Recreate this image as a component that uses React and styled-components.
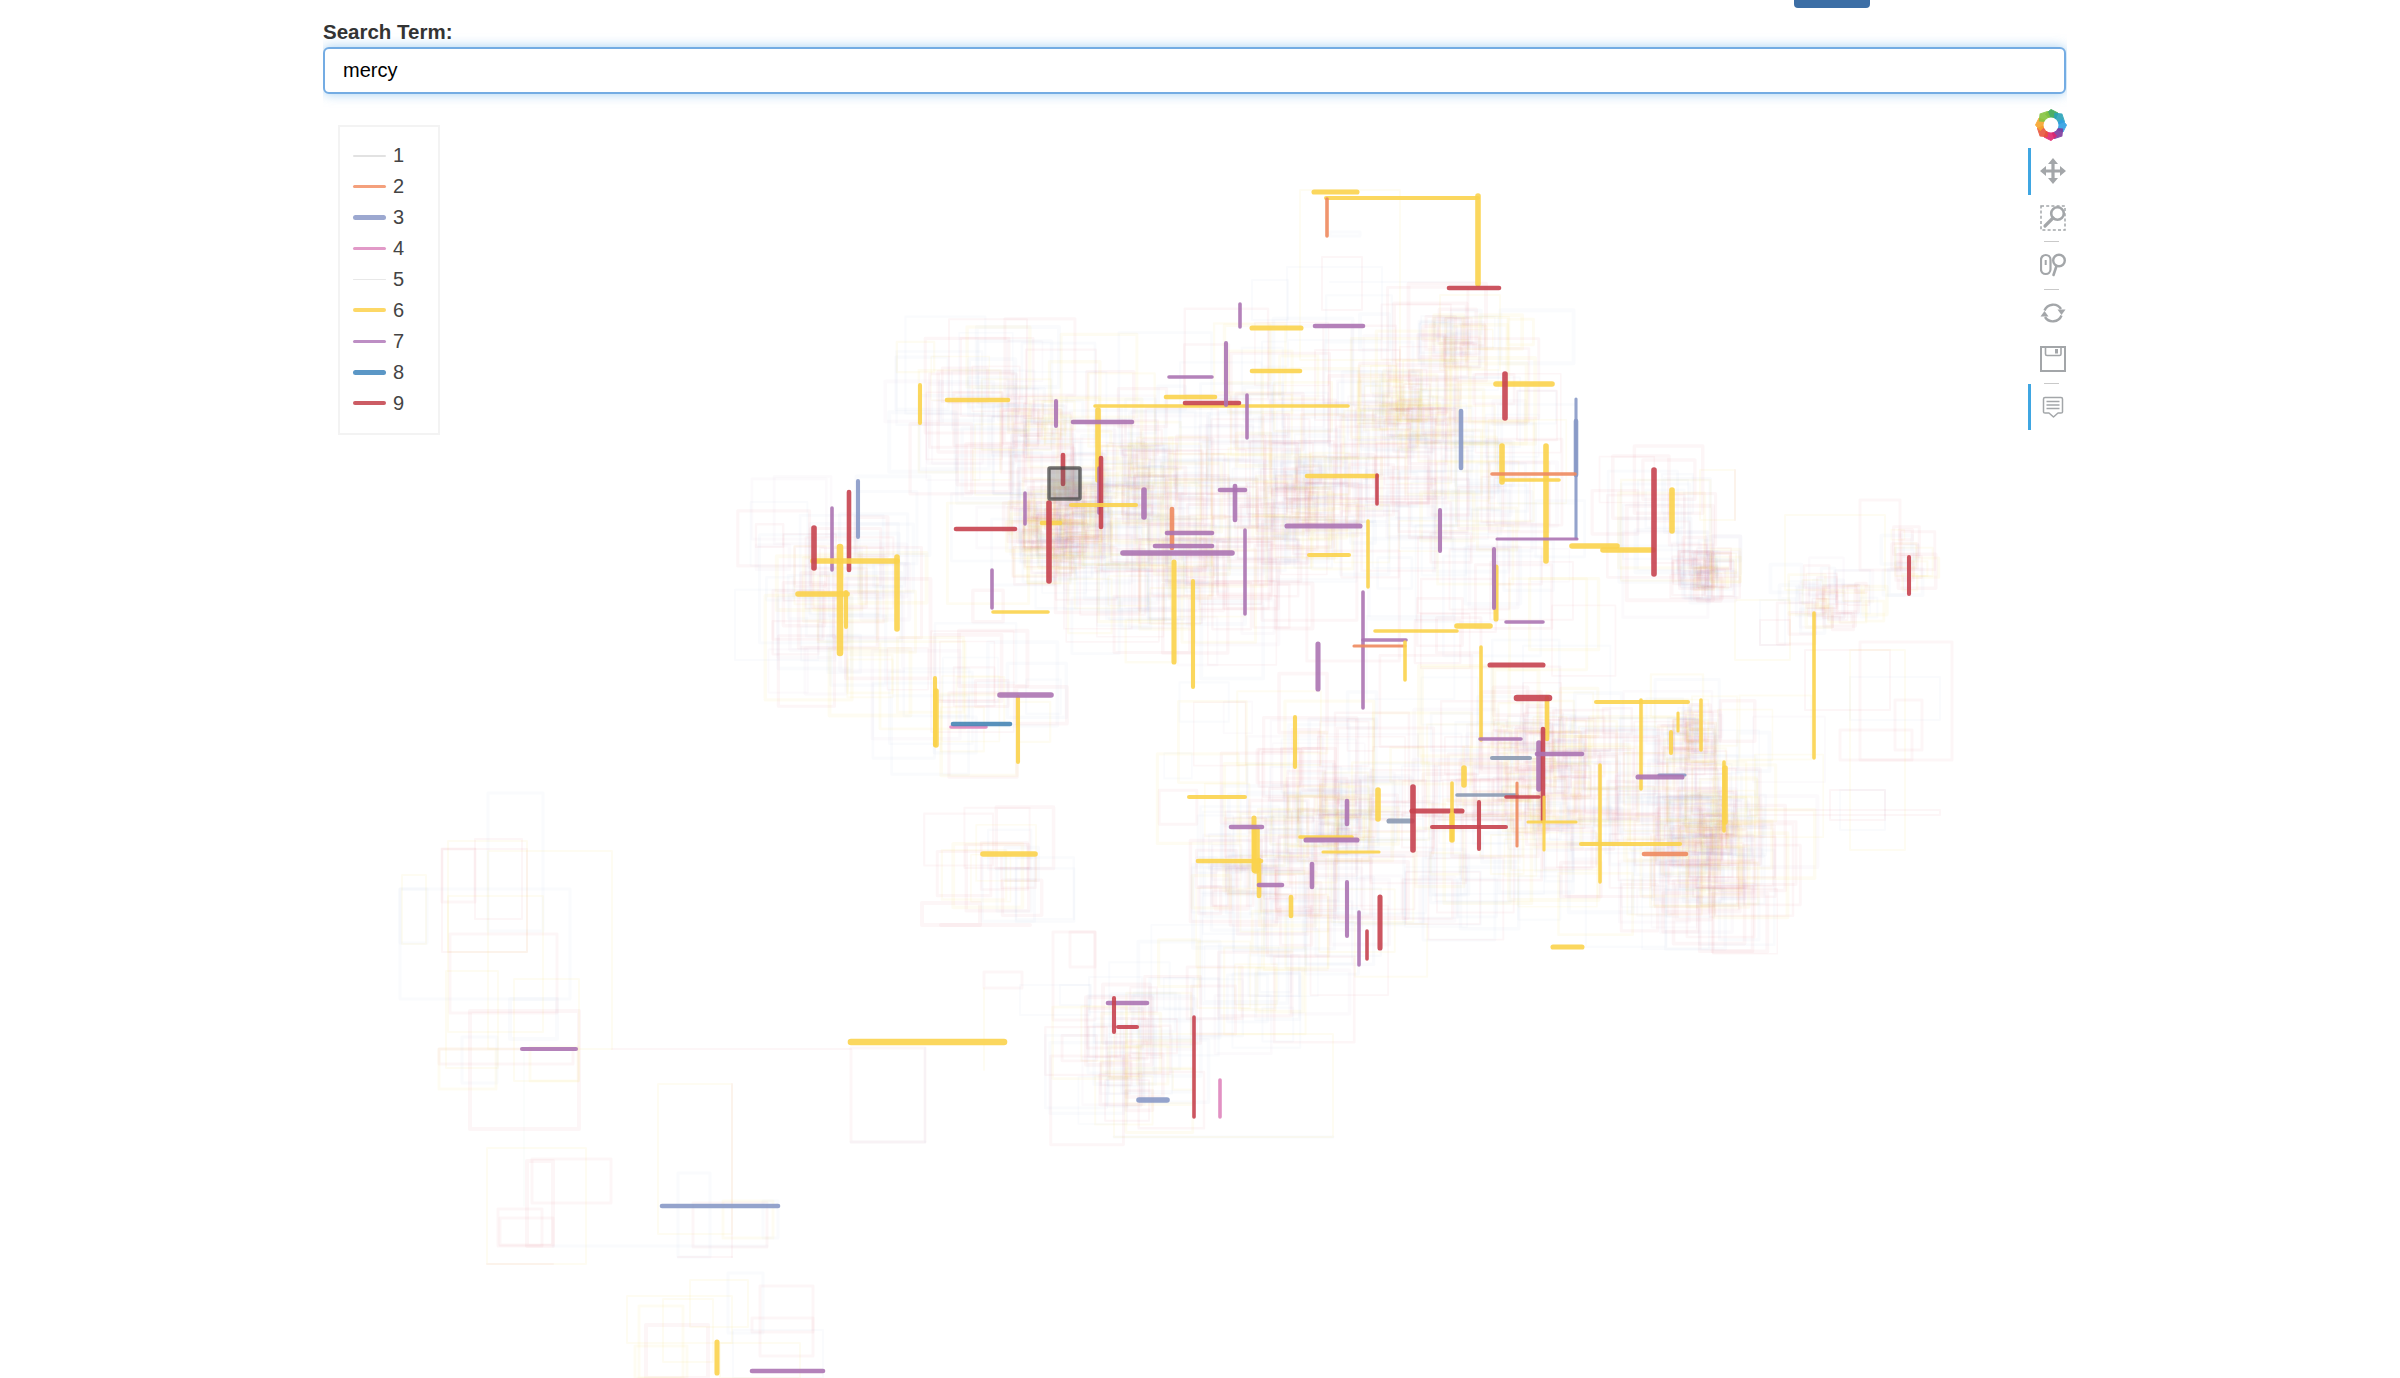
import React from "react";
import styled, { createGlobalStyle } from "styled-components";

const GlobalStyle = createGlobalStyle`
  html, body {
    margin: 0;
    padding: 0;
    background: #fff;
    overflow: hidden;
    font-family: "Liberation Sans", Arial, sans-serif;
  }
`;

const Page = styled.div`
  width: 1744px;
  height: 1378px;
  margin-left: 323px;
  display: flex;
  flex-direction: column;
  overflow: hidden;
`;

const TopBar = styled.div`
  height: 8px;
  display: flex;
  justify-content: flex-end;
  padding-right: 197px;
`;

const TopButton = styled.button`
  width: 76px;
  height: 8px;
  padding: 0;
  border: none;
  border-radius: 0 0 4px 4px;
  background: #3c6ea5;
`;

const Label = styled.label`
  display: block;
  margin-top: 12px;
  height: 27px;
  font-size: 20.5px;
  line-height: 23px;
  font-weight: 700;
  color: #333;
`;

const SearchInput = styled.input`
  box-sizing: border-box;
  width: calc(100% - 1px);
  height: 47px;
  padding: 0 18px;
  border: 2px solid #74ace3;
  border-radius: 6px;
  outline: none;
  box-shadow: 0 0 12px rgba(102, 175, 233, 0.6);
  font-family: inherit;
  font-size: 20px;
  color: #000;
`;

const Plot = styled.div`
  position: relative;
  margin-top: 8px;
  flex: 1;
  min-height: 0;
`;

const Canvas = styled.svg`
  display: block;
  width: 100%;
  height: 100%;
  filter: blur(0.5px);
`;

const Legend = styled.div`
  position: absolute;
  top: 23px;
  left: 15px;
  box-sizing: border-box;
  width: 102px;
  height: 310px;
  padding: 13.5px 0 0 13px;
  border: 2px solid #f3f3f3;
  background: #fff;
`;

const LegendRow = styled.div`
  height: 30.9px;
  display: flex;
  align-items: center;
  gap: 7px;
  font-size: 20px;
  color: #444;
`;

const Swatch = styled.span`
  width: 33px;
  height: ${({ $size }) => $size}px;
  border-radius: 3px;
  background: ${({ $color }) => $color};
`;

const Toolbar = styled.div`
  position: absolute;
  top: 0;
  right: 1px;
  width: 38px;
  display: flex;
  flex-direction: column;
`;

const LogoSlot = styled.div`
  height: 46px;
  display: flex;
  align-items: center;
  justify-content: flex-end;
  margin-right: -1px;
`;

const Tool = styled.div`
  box-sizing: border-box;
  height: 46.5px;
  display: flex;
  align-items: center;
  justify-content: flex-end;
  border-left: 3px solid ${({ $active }) => ($active ? "#3fa6e2" : "transparent")};
`;

const ToolDivider = styled.div`
  align-self: flex-end;
  width: 15px;
  height: 1px;
  margin-right: 7px;
  background: #c9c9c9;
`;

const ICON = "#a3a6a9";

const BokehLogo = () => {
  const colors = ["#3aa655", "#2aa3b8", "#2f9fe3", "#7d3a9e", "#e0256f", "#e8553c", "#f7a52c", "#86c440"];
  return (
    <svg width="32" height="32" viewBox="0 0 32 32">
      {colors.map((c, i) => (
        <path
          key={c}
          d="M10.5 5 L16 0.5 L23 4 L20.5 10 L14.5 9.6 Z"
          fill={c}
          stroke={c}
          strokeWidth="1"
          strokeLinejoin="round"
          opacity="0.9"
          transform={`rotate(${i * 45} 16 16)`}
        />
      ))}
      <circle cx="16" cy="16" r="7.5" fill="#fff" />
    </svg>
  );
};

const MoveIcon = () => (
  <svg width="26" height="26" viewBox="0 0 26 26">
    <path
      fill={ICON}
      d="M13 0 l5 6 h-3.4 v5.4 H20 V8 l6 5 -6 5 v-3.4 h-5.4 V20 H18 l-5 6 -5 -6 h3.4 v-5.4 H6 V18 l-6 -5 6 -5 v3.4 h5.4 V6 H8 z"
    />
  </svg>
);

const BoxZoomIcon = () => (
  <svg width="26" height="26" viewBox="0 0 26 26" fill="none" stroke={ICON}>
    <rect x="1" y="1" width="24" height="24" strokeWidth="1.5" strokeDasharray="3 2.2" />
    <circle cx="17.5" cy="8.5" r="6.3" strokeWidth="2.6" fill="#fff" />
    <path d="M13 13 L5 21" strokeWidth="3.2" strokeLinecap="round" />
  </svg>
);

const WheelZoomIcon = () => (
  <svg width="26" height="24" viewBox="0 0 26 24" fill="none" stroke={ICON}>
    <rect x="1" y="2" width="9.5" height="19" rx="4.7" strokeWidth="2.2" />
    <path d="M5.7 7 V12" strokeWidth="2" />
    <circle cx="19" cy="7.5" r="5.8" strokeWidth="2.4" />
    <path d="M16.5 13 L13.5 22" strokeWidth="2.6" strokeLinecap="round" />
  </svg>
);

const ResetIcon = () => (
  <svg width="26" height="26" viewBox="0 0 26 26" fill="none" stroke={ICON}>
    <path d="M4.5 10.5 A9.3 9.3 0 0 1 21 9" strokeWidth="2.4" />
    <path d="M21.5 15.5 A9.3 9.3 0 0 1 5 17" strokeWidth="2.4" />
    <path d="M17.5 9.5 H25.5 L21.5 15 Z" fill={ICON} stroke="none" />
    <path d="M0.5 16.5 H8.5 L4.5 11 Z" fill={ICON} stroke="none" />
  </svg>
);

const SaveIcon = () => (
  <svg width="26" height="26" viewBox="0 0 26 26" fill="none" stroke={ICON}>
    <rect x="1" y="1" width="24" height="24" strokeWidth="2" />
    <path d="M5.5 1 V8 Q5.5 9.5 7 9.5 H19.5 Q21 9.5 21 8 V1" strokeWidth="1.6" />
    <rect x="15" y="3" width="3" height="4.5" fill={ICON} stroke="none" />
  </svg>
);

const HoverIcon = () => (
  <svg width="26" height="24" viewBox="0 0 26 24" fill="none" stroke={ICON}>
    <path
      d="M5 2.5 H21 Q22.5 2.5 22.5 4 V17 Q22.5 18 21 18 H18 L13.5 22 L9 18 H5 Q3.5 18 3.5 17 V4 Q3.5 2.5 5 2.5 Z"
      strokeWidth="1.5"
      strokeLinejoin="round"
    />
    <path d="M6.5 6.5 H19.5 M6.5 10 H19.5 M6.5 13.5 H19.5" strokeWidth="1.4" />
  </svg>
);

const LEGEND = [
  ["1", "#e2e2e2", 1.5],
  ["2", "#f4a07c", 3],
  ["3", "#9ca8d0", 5],
  ["4", "#e29ac8", 3.5],
  ["5", "#e8e8e8", 1.5],
  ["6", "#fdd866", 4],
  ["7", "#bd8ec4", 3.5],
  ["8", "#5b97c6", 5],
  ["9", "#cc5c64", 4],
];

const STROKE = {
  y: "#fbd34c",
  r: "#c6434f",
  p: "#ac74b2",
  b: "#8899c6",
  o: "#ee8a5e",
  s: "#4685b5",
  k: "#df85bd",
  g: "#8b9ab2",
};

// color, width, x1, y1, x2, y2
const LINES = [
  ["y", 3.5, 920, 385, 920, 423], ["y", 4, 947, 400, 1008, 400], ["p", 3.5, 1056, 401, 1056, 426],
  ["y", 5, 1098, 410, 1098, 480], ["p", 4, 1073, 422, 1132, 422], ["y", 3, 1095, 406, 1348, 406],
  ["y", 4, 1166, 397, 1215, 397], ["r", 4, 1185, 403, 1239, 403], ["p", 3, 1169, 377, 1212, 377],
  ["r", 4, 1063, 455, 1063, 484], ["p", 3, 1099, 468, 1099, 513], ["r", 4, 1101, 458, 1101, 527],
  ["y", 3.5, 1071, 505, 1136, 505], ["p", 5, 1144, 490, 1144, 517], ["o", 4, 1172, 509, 1172, 548],
  ["p", 4, 1167, 533, 1212, 533], ["p", 4, 1155, 546, 1212, 546], ["p", 5, 1123, 553, 1232, 553],
  ["r", 4, 849, 492, 849, 570], ["p", 3, 832, 508, 832, 570], ["b", 3.5, 858, 481, 858, 537],
  ["y", 5, 813, 561, 897, 561], ["r", 5, 814, 528, 814, 568], ["r", 4, 956, 529, 1015, 529],
  ["p", 3, 1025, 493, 1025, 524], ["y", 4, 1042, 523, 1060, 523], ["r", 5, 1049, 503, 1049, 581],
  ["y", 5, 897, 557, 897, 629], ["y", 6, 840, 547, 840, 653], ["y", 5, 798, 594, 847, 594],
  ["y", 3.5, 846, 592, 846, 627], ["p", 3, 992, 570, 992, 608], ["y", 3, 993, 612, 1048, 612],
  ["y", 4.5, 1174, 562, 1174, 662], ["y", 3.5, 1193, 581, 1193, 687], ["y", 3.5, 935, 678, 935, 745],
  ["y", 5, 936, 691, 936, 745], ["y", 3.5, 1018, 697, 1018, 762], ["p", 5, 1000, 695, 1051, 695],
  ["k", 3, 951, 727, 986, 727], ["s", 4, 953, 724, 1010, 724], ["y", 5, 983, 854, 1035, 854],
  ["y", 4.5, 1314, 192, 1357, 192], ["y", 3.5, 1326, 198, 1478, 198], ["o", 3, 1327, 199, 1327, 236],
  ["y", 5, 1478, 196, 1478, 284], ["r", 4, 1449, 288, 1499, 288], ["p", 3, 1240, 304, 1240, 327],
  ["y", 4.5, 1252, 328, 1301, 328], ["p", 4, 1315, 326, 1363, 326], ["p", 3.5, 1226, 343, 1226, 405],
  ["y", 4, 1252, 371, 1300, 371], ["p", 3, 1247, 395, 1247, 438], ["y", 5, 1496, 384, 1552, 384],
  ["r", 5, 1505, 374, 1505, 418], ["b", 4, 1461, 411, 1461, 468], ["b", 2.5, 1576, 399, 1576, 538],
  ["b", 4, 1576, 421, 1576, 475], ["y", 5, 1502, 446, 1502, 482], ["y", 5, 1546, 446, 1546, 561],
  ["o", 3, 1492, 474, 1575, 474], ["y", 3, 1502, 480, 1559, 480], ["y", 4, 1307, 476, 1377, 476],
  ["r", 3, 1377, 475, 1377, 504], ["p", 4, 1220, 490, 1245, 490], ["p", 4, 1235, 486, 1235, 520],
  ["p", 4.5, 1287, 526, 1360, 526], ["y", 3, 1368, 521, 1368, 587], ["p", 3.5, 1440, 510, 1440, 551],
  ["p", 2.5, 1497, 539, 1577, 539], ["y", 5, 1603, 550, 1653, 550], ["y", 5, 1572, 546, 1617, 546],
  ["r", 5, 1654, 470, 1654, 574], ["y", 5, 1672, 490, 1672, 531], ["p", 3, 1245, 530, 1245, 614],
  ["y", 3.5, 1309, 555, 1349, 555], ["y", 4.5, 1496, 567, 1496, 619], ["p", 3.5, 1494, 549, 1494, 608],
  ["p", 3, 1506, 622, 1543, 622], ["p", 3, 1363, 592, 1363, 708], ["y", 3, 1375, 631, 1457, 631],
  ["y", 5, 1457, 626, 1490, 626], ["p", 3, 1363, 640, 1406, 640], ["o", 2.5, 1354, 646, 1405, 646],
  ["y", 3, 1405, 642, 1405, 680], ["p", 4.5, 1318, 644, 1318, 689], ["r", 4.5, 1490, 665, 1543, 665],
  ["y", 3, 1481, 647, 1481, 740], ["y", 4, 1547, 698, 1547, 739], ["r", 6, 1517, 698, 1549, 698],
  ["p", 3, 1480, 739, 1521, 739], ["p", 5, 1539, 743, 1539, 789], ["r", 4, 1543, 729, 1543, 821],
  ["p", 4, 1537, 754, 1582, 754], ["g", 3.5, 1492, 758, 1530, 758], ["y", 5, 1464, 768, 1464, 785],
  ["y", 3.5, 1295, 717, 1295, 767], ["y", 3.5, 1189, 797, 1245, 797], ["y", 5, 1378, 790, 1378, 819],
  ["p", 4, 1347, 801, 1347, 824], ["g", 4.5, 1389, 821, 1412, 821], ["r", 5, 1413, 787, 1413, 850],
  ["r", 4.5, 1412, 811, 1462, 811], ["y", 3, 1452, 783, 1452, 840], ["y", 5, 1452, 815, 1452, 840],
  ["r", 3.5, 1432, 827, 1506, 827], ["r", 3.5, 1479, 802, 1479, 849], ["g", 3, 1457, 795, 1517, 795],
  ["o", 2.5, 1517, 783, 1517, 846], ["r", 3, 1506, 797, 1539, 797], ["y", 2.5, 1528, 822, 1576, 822],
  ["y", 2.5, 1544, 797, 1544, 850], ["y", 3, 1600, 765, 1600, 882], ["y", 3.5, 1581, 844, 1680, 844],
  ["o", 4, 1644, 854, 1686, 854], ["y", 3.5, 1596, 702, 1688, 702], ["y", 3, 1641, 700, 1641, 789],
  ["y", 3, 1701, 700, 1701, 750], ["y", 2.5, 1678, 713, 1678, 731], ["y", 3.5, 1671, 732, 1671, 753],
  ["b", 2.5, 1659, 775, 1685, 775], ["p", 4.5, 1638, 777, 1682, 777], ["y", 3, 1724, 762, 1724, 831],
  ["y", 5, 1725, 768, 1725, 822], ["y", 3, 1814, 613, 1814, 758], ["r", 3.5, 1909, 557, 1909, 594],
  ["y", 4.5, 1553, 947, 1582, 947], ["y", 4.5, 1254, 818, 1254, 870], ["y", 7, 1256, 830, 1256, 870],
  ["p", 4, 1231, 827, 1262, 827], ["y", 4, 1259, 860, 1259, 896], ["y", 4, 1198, 861, 1261, 861],
  ["p", 4, 1259, 885, 1282, 885], ["y", 4, 1291, 897, 1291, 916], ["p", 4, 1312, 864, 1312, 887],
  ["y", 3, 1300, 837, 1352, 837], ["p", 4.5, 1306, 840, 1357, 840], ["y", 2.5, 1323, 852, 1379, 852],
  ["p", 3.5, 1347, 882, 1347, 936], ["p", 3, 1359, 912, 1359, 965], ["r", 3, 1367, 931, 1367, 959],
  ["r", 4.5, 1380, 897, 1380, 948], ["y", 6, 851, 1042, 1004, 1042], ["p", 4, 1108, 1003, 1147, 1003],
  ["r", 3.5, 1114, 998, 1114, 1032], ["r", 3.5, 1118, 1027, 1137, 1027], ["r", 3, 1194, 1017, 1194, 1117],
  ["k", 3, 1220, 1080, 1220, 1117], ["b", 5, 1139, 1100, 1167, 1100], ["p", 4, 752, 1371, 823, 1371],
  ["y", 4.5, 717, 1342, 717, 1373], ["p", 3.5, 522, 1049, 576, 1049], ["b", 4, 662, 1206, 778, 1206],
];

const FAINT = { r: "#c8303c", y: "#f5c400", b: "#6f8cc0", p: "#9a5fa8", t: "#6fb0a0" };
const FAINT_OPACITY = { r: 0.042, y: 0.05, b: 0.03, p: 0.03, t: 0.03 };

// color, width, x1, y1, x2, y2 of the faint boxes in the sparse corners
const BOXES = [
  ["b", 3, 488, 793, 543, 931], ["r", 2, 475, 839, 522, 919], ["y", 2, 448, 841, 527, 952],
  ["r", 3, 442, 849, 475, 902], ["y", 2, 488, 851, 612, 1049], ["b", 3, 400, 889, 570, 999],
  ["y", 2, 402, 875, 426, 944], ["b", 3, 400, 889, 427, 943], ["r", 2, 442, 849, 527, 952],
  ["r", 3, 450, 934, 557, 1013], ["y", 2, 448, 896, 543, 1032], ["r", 4, 470, 1011, 579, 1129],
  ["y", 2, 514, 979, 579, 1081], ["b", 4, 510, 999, 557, 1039], ["y", 2, 446, 971, 498, 1068],
  ["r", 3, 439, 1049, 573, 1064], ["y", 3, 439, 1049, 496, 1089], ["b", 3, 462, 1037, 497, 1083],
  ["y", 3, 530, 1047, 578, 1081], ["r", 2, 612, 1049, 851, 1049], ["r", 3, 851, 1048, 925, 1142],
  ["b", 3, 851, 1142, 925, 1142], ["b", 2, 925, 1048, 925, 1142], ["y", 2, 658, 1084, 732, 1234],
  ["b", 3, 678, 1173, 710, 1257], ["r", 2, 678, 1257, 732, 1257], ["r", 2, 732, 1084, 732, 1257],
  ["y", 3, 723, 1201, 773, 1238], ["b", 3, 763, 1201, 778, 1238], ["r", 3, 693, 1203, 767, 1247],
  ["t", 1.5, 524, 1049, 524, 1206], ["y", 2, 487, 1148, 586, 1264], ["r", 3, 532, 1159, 611, 1203],
  ["r", 4, 527, 1161, 553, 1246], ["r", 3, 498, 1209, 542, 1246], ["r", 3, 500, 1218, 553, 1245],
  ["b", 3, 553, 1246, 767, 1246], ["r", 2, 487, 1264, 553, 1264], ["y", 2, 627, 1296, 732, 1343],
  ["y", 3, 639, 1306, 683, 1378], ["r", 4, 646, 1325, 708, 1378], ["y", 2, 690, 1280, 748, 1327],
  ["b", 3, 728, 1273, 763, 1333], ["r", 3, 760, 1286, 813, 1356], ["b", 2, 733, 1330, 823, 1378],
  ["y", 2, 663, 1299, 713, 1362], ["r", 3, 752, 1318, 813, 1332], ["y", 2, 720, 1343, 800, 1378],
  ["y", 3, 635, 1346, 687, 1378], ["b", 3, 1114, 1137, 1333, 1137], ["y", 2, 1114, 1034, 1333, 1137],
  ["r", 3, 984, 972, 1022, 988], ["y", 2, 984, 988, 984, 1070], ["b", 2, 1020, 985, 1090, 1015],
  ["r", 3, 1053, 932, 1095, 1020], ["r", 3, 1070, 932, 1095, 967], ["r", 4, 922, 903, 980, 925],
  ["r", 4, 941, 925, 1030, 925], ["b", 2, 1060, 985, 1091, 1005], ["b", 2, 1089, 977, 1142, 1012],
  ["y", 2, 1300, 190, 1400, 360], ["b", 3, 1330, 232, 1360, 236], ["b", 2, 1330, 282, 1478, 282],
  ["b", 2, 1287, 267, 1382, 340], ["r", 2, 1322, 257, 1362, 310], ["b", 2, 1252, 280, 1288, 320],
  ["y", 2, 1440, 295, 1500, 370], ["r", 2, 1315, 350, 1400, 420],
  ["y", 2, 1700, 470, 1735, 520], ["r", 2, 1735, 470, 1735, 520], ["b", 2, 1638, 480, 1688, 570],
  ["y", 2, 1785, 515, 1885, 590], ["r", 3, 1860, 500, 1900, 570], ["r", 2, 1805, 650, 1890, 710],
  ["r", 3, 1860, 642, 1952, 760], ["b", 2, 1850, 677, 1940, 720], ["r", 3, 1895, 700, 1922, 750],
  ["r", 3, 1840, 730, 1912, 760], ["y", 2, 1735, 600, 1790, 660], ["r", 2, 1760, 620, 1790, 645],
  ["b", 2, 1760, 600, 1785, 645], ["r", 2, 1830, 790, 1885, 820], ["b", 2, 1840, 790, 1885, 830],
  ["y", 2, 1850, 650, 1905, 850], ["r", 2, 1750, 810, 1940, 815],
];

const mulberry = (seed) => () => {
  seed |= 0;
  seed = (seed + 0x6d2b79f5) | 0;
  let t = Math.imul(seed ^ (seed >>> 15), 1 | seed);
  t = (t + Math.imul(t ^ (t >>> 7), 61 | t)) ^ t;
  return ((t ^ (t >>> 14)) >>> 0) / 4294967296;
};

// cx, cy, spread x, spread y, count, smallest, largest
const CLUSTERS = [
  [1240, 480, 140, 70, 170, 25, 100], [1000, 420, 55, 35, 50, 30, 90], [1420, 440, 65, 60, 80, 25, 90],
  [1150, 560, 60, 45, 90, 25, 85], [1500, 560, 50, 60, 35, 30, 90], [1660, 530, 25, 28, 20, 30, 90],
  [830, 590, 35, 45, 55, 25, 90], [960, 690, 50, 25, 30, 30, 90], [1340, 800, 90, 55, 110, 25, 100],
  [1560, 790, 65, 60, 90, 25, 90], [1690, 820, 55, 55, 80, 25, 90], [1700, 890, 40, 22, 30, 30, 80],
  [1310, 900, 45, 28, 40, 30, 90], [1130, 1050, 30, 28, 50, 20, 75], [1000, 880, 25, 25, 18, 30, 75],
  [1260, 985, 45, 22, 25, 30, 90],
  [1058, 535, 20, 20, 110, 12, 45], [1300, 500, 35, 28, 70, 15, 55], [1400, 410, 24, 17, 55, 12, 48],
  [1455, 340, 14, 10, 30, 12, 40], [1706, 572, 11, 13, 55, 12, 35], [1693, 735, 12, 12, 40, 12, 35],
  [1715, 830, 20, 24, 75, 12, 55], [1330, 825, 30, 17, 55, 12, 48], [1540, 730, 22, 16, 35, 12, 40],
  [1545, 790, 20, 18, 35, 12, 40], [1240, 870, 20, 20, 25, 15, 48], [1830, 600, 25, 13, 40, 10, 38],
  [1910, 560, 9, 14, 18, 12, 40], [1130, 470, 25, 18, 35, 15, 45], [1040, 425, 18, 12, 25, 15, 35],
];

const buildClusterBoxes = () => {
  const rnd = mulberry(41);
  const keys = ["r", "r", "r", "y", "y", "b", "b", "b", "p"];
  const gauss = () => {
    const g = Math.sqrt(-2 * Math.log(rnd() + 1e-6)) * Math.cos(2 * Math.PI * rnd());
    return Math.max(-1.8, Math.min(1.8, g));
  };
  const out = [];
  CLUSTERS.forEach(([cx, cy, sx, sy, n, lo, hi]) => {
    for (let i = 0; i < n; i++) {
      const w = lo + rnd() * (hi - lo);
      const h = w * (0.7 + rnd() * 0.6);
      const x = cx + gauss() * sx - w / 2;
      const y = cy + gauss() * sy - h / 2;
      out.push([keys[Math.floor(rnd() * keys.length)], 1.5 + rnd() * 2.5, x, y, x + w, y + h]);
    }
  });
  return out;
};

const ALL_BOXES = [...BOXES, ...buildClusterBoxes()];

const App = () => (
  <Page>
    <GlobalStyle />
    <TopBar>
      <TopButton aria-label="Search" />
    </TopBar>
    <Label htmlFor="term">Search Term:</Label>
    <SearchInput id="term" defaultValue="mercy" />
    <Plot>
      <Canvas viewBox="323 102 1744 1276" preserveAspectRatio="xMinYMin slice">
        <g fill="none" strokeLinejoin="round" strokeLinecap="round">
          {ALL_BOXES.map(([c, w, x1, y1, x2, y2], i) =>
            x1 === x2 || y1 === y2 ? (
              <line key={i} x1={x1} y1={y1} x2={x2} y2={y2} stroke={FAINT[c]} strokeOpacity={FAINT_OPACITY[c]} strokeWidth={w} />
            ) : (
              <rect key={i} x={x1} y={y1} width={x2 - x1} height={y2 - y1} stroke={FAINT[c]} strokeOpacity={FAINT_OPACITY[c]} strokeWidth={w} />
            )
          )}
        </g>
        <g strokeLinecap="round" strokeOpacity="0.9">
          {LINES.map(([c, w, x1, y1, x2, y2], i) => (
            <line key={i} x1={x1} y1={y1} x2={x2} y2={y2} stroke={STROKE[c]} strokeWidth={w + 0.6} />
          ))}
        </g>
        <rect
          x="1049"
          y="468"
          width="31"
          height="31"
          rx="1"
          fill="#555"
          fillOpacity="0.3"
          stroke="#444"
          strokeOpacity="0.75"
          strokeWidth="3.5"
        />
      </Canvas>
      <Legend>
        {LEGEND.map(([label, color, size]) => (
          <LegendRow key={label}>
            <Swatch $color={color} $size={size} />
            {label}
          </LegendRow>
        ))}
      </Legend>
      <Toolbar>
        <LogoSlot>
          <BokehLogo />
        </LogoSlot>
        <Tool $active>
          <MoveIcon />
        </Tool>
        <Tool>
          <BoxZoomIcon />
        </Tool>
        <ToolDivider />
        <Tool>
          <WheelZoomIcon />
        </Tool>
        <ToolDivider />
        <Tool>
          <ResetIcon />
        </Tool>
        <Tool>
          <SaveIcon />
        </Tool>
        <ToolDivider />
        <Tool $active>
          <HoverIcon />
        </Tool>
      </Toolbar>
    </Plot>
  </Page>
);

export default App;
